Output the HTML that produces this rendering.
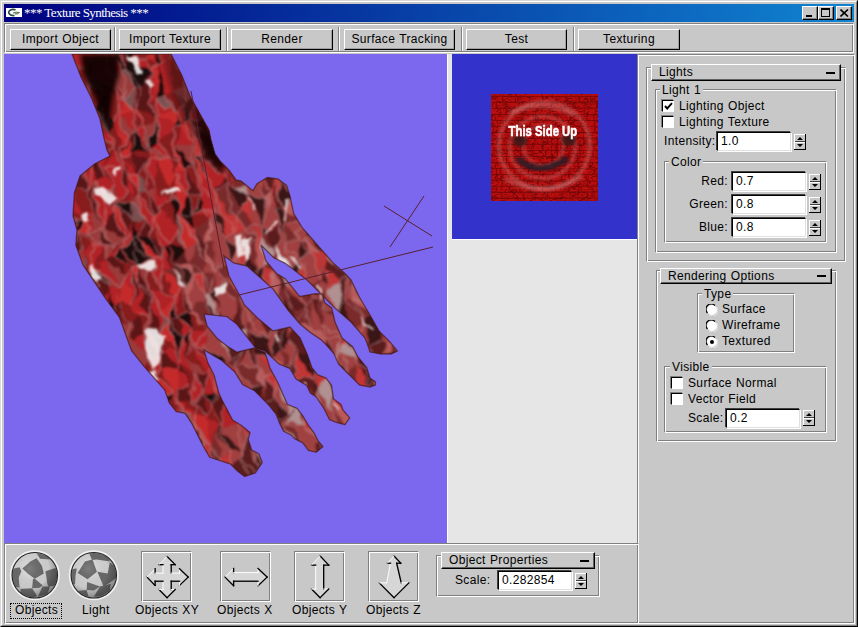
<!DOCTYPE html>
<html><head><meta charset="utf-8">
<style>
*{margin:0;padding:0;box-sizing:border-box}
html,body{width:858px;height:627px;overflow:hidden;background:#c8c8c8}
body{position:relative;font-family:"Liberation Sans",sans-serif;font-size:12px;color:#000}
.a{position:absolute}
.win{left:0;top:0;width:858px;height:627px;background:#c8c8c8;border-top:1px solid #d8d8d8;border-left:1px solid #d8d8d8;border-right:1px solid #000;border-bottom:1px solid #000}
.win2{left:1px;top:1px;width:856px;height:625px;border-top:1px solid #fff;border-left:1px solid #fff;border-right:1px solid #808080;border-bottom:1px solid #808080}
.title{left:4px;top:4px;width:850px;height:18px;background:linear-gradient(to right,#000080,#1084d0)}
.ttext{left:20px;top:2px;color:#fff;font-family:"Liberation Serif",serif;font-size:13px;line-height:13px;letter-spacing:-0.55px;white-space:nowrap}
.tb{width:16px;height:14px;top:6px;background:#c8c8c8;border-top:1px solid #fff;border-left:1px solid #fff;border-right:1px solid #000;border-bottom:1px solid #000;box-shadow:inset -1px -1px 0 #808080}
.groove{border-top:1px solid #808080;border-left:1px solid #808080;border-right:1px solid #fff;border-bottom:1px solid #fff;box-shadow:inset 1px 1px 0 #fff,inset -1px -1px 0 #808080}
.btn{top:29px;height:21px;background:#c8c8c8;border-top:1px solid #fff;border-left:1px solid #fff;border-right:1px solid #000;border-bottom:1px solid #000;box-shadow:inset -1px -1px 0 #a0a0a0;text-align:center;line-height:18px;font-size:12px;letter-spacing:0.35px;word-spacing:0.5px;white-space:nowrap}
.sep{top:27px;width:2px;height:24px;border-left:1px solid #808080;border-right:1px solid #fff}
.lbl{white-space:nowrap;font-size:12px;line-height:13px;letter-spacing:0.35px;word-spacing:0.5px}
.hdr{background:#c8c8c8;border-top:1px solid #fff;border-left:1px solid #fff;border-right:1px solid #000;border-bottom:1px solid #000;box-shadow:inset -1px -1px 0 #606060}
.inp{background:#fff;border-top:1px solid #000;border-left:1px solid #000;border-right:1px solid #e0e0e0;border-bottom:1px solid #e0e0e0;box-shadow:-1px -1px 0 #404040, 1px 1px 0 #fff}
.spin{background:#c8c8c8;border-top:1px solid #fff;border-left:1px solid #fff;border-right:1px solid #000;border-bottom:1px solid #000}
.cb{width:12px;height:12px;background:#fff;border-top:1px solid #000;border-left:1px solid #000;border-right:1px solid #fff;border-bottom:1px solid #fff;box-shadow:-1px -1px 0 #808080}
</style></head><body>
<div class="a win"></div>
<div class="a win2"></div>
<div class="a title">
  <div class="a" style="left:2px;top:4px;width:16px;height:9px;background:#fff"></div>
  <svg class="a" style="left:2px;top:4px" width="16" height="9" viewBox="0 0 16 9"><path d="M9.5 2 Q7 0.8 4.5 2 Q2 3.5 3 5.5 Q4.5 8 8.5 7.5" fill="none" stroke="#2a4a40" stroke-width="1.6"/><path d="M7 5 Q10 3.5 13.5 4.5 Q12 6.5 9 6" fill="#b8c090" stroke="#506a50" stroke-width="0.9"/></svg>
  <div class="a ttext">*** Texture Synthesis ***</div>
</div>
<div class="a tb" style="left:802px"><div class="a" style="left:3px;top:8px;width:6px;height:2px;background:#000"></div></div>
<div class="a tb" style="left:818px"><div class="a" style="left:2px;top:1px;width:9px;height:9px;border:1px solid #000;border-top-width:2px"></div></div>
<div class="a tb" style="left:836px"><svg class="a" style="left:3px;top:2px" width="9" height="8"><path d="M0.5 0.5 L8 7.5 M8 0.5 L0.5 7.5" stroke="#000" stroke-width="1.6"/></svg></div>

<!-- toolbar -->
<div class="a groove" style="left:4px;top:23px;width:850px;height:30px"></div>
<div class="a btn" style="left:10px;width:101px">Import Object</div>
<div class="a sep" style="left:114px"></div>
<div class="a btn" style="left:119px;width:102px">Import Texture</div>
<div class="a sep" style="left:226px"></div>
<div class="a btn" style="left:231px;width:102px">Render</div>
<div class="a sep" style="left:338px"></div>
<div class="a btn" style="left:344px;width:111px">Surface Tracking</div>
<div class="a sep" style="left:461px"></div>
<div class="a btn" style="left:466px;width:101px">Test</div>
<div class="a sep" style="left:573px"></div>
<div class="a btn" style="left:578px;width:102px">Texturing</div>

<!-- viewport -->
<div class="a" style="left:4px;top:54px;width:443px;height:489px;background:#7b68ee;overflow:hidden">
<svg class="a" style="left:-4px;top:-54px" width="858" height="627" viewBox="0 0 858 627">
<defs><clipPath id="hc"><polygon points="72.0,54.0 171.0,54.0 181.7,75.0 190.0,96.0 199.5,113.0 209.0,130.0 211.0,140.0 215.0,154.0 220.0,161.0 229.0,170.0 236.0,180.0 241.0,181.0 253.0,190.7 257.0,183.7 267.4,177.6 278.0,179.0 286.6,185.5 290.0,196.0 293.6,213.4 302.0,227.4 313.0,240.0 333.7,263.6 345.6,274.0 351.0,280.0 354.4,287.0 359.6,297.5 370.0,315.0 379.0,331.0 384.0,336.0 389.5,341.4 397.4,351.0 391.0,354.0 381.0,354.0 370.0,352.0 367.0,343.0 365.0,338.0 351.0,322.0 335.0,308.0 321.0,294.0 307.0,280.0 285.0,263.0 274.0,258.0 261.0,245.0 266.0,261.0 276.5,273.5 285.0,278.6 299.7,296.4 315.4,293.8 322.8,294.0 324.6,302.8 331.6,308.0 335.0,322.0 342.0,338.0 352.6,346.7 358.0,357.0 366.7,367.7 370.0,378.0 375.4,381.8 375.4,385.0 370.0,387.0 359.6,385.0 352.6,378.0 347.4,373.0 338.6,364.0 334.0,353.7 328.0,346.7 321.0,339.6 310.5,332.6 300.0,323.9 288.0,310.0 273.0,289.0 264.0,281.0 247.0,266.0 234.0,263.0 224.0,256.0 229.0,276.0 239.4,295.0 244.5,305.0 257.0,317.5 273.0,331.0 290.0,327.0 300.0,338.0 307.0,353.7 312.0,367.7 317.5,374.7 326.0,378.0 331.5,385.3 333.4,398.7 341.0,404.5 343.0,410.0 349.7,417.9 344.9,424.6 337.2,422.7 329.6,419.8 323.8,408.3 316.2,396.8 310.4,393.0 306.6,385.3 296.0,379.0 290.0,368.6 279.0,364.0 265.0,351.0 256.0,348.5 251.0,342.0 243.0,332.0 237.0,324.2 227.0,316.6 204.0,314.0 207.0,326.0 217.0,338.3 227.0,346.0 237.0,352.3 254.0,348.0 265.0,352.6 270.0,368.0 278.0,383.0 287.4,404.5 297.0,408.3 302.8,416.0 308.5,425.5 314.2,433.2 318.0,440.8 322.9,446.6 316.2,452.3 308.5,450.4 302.8,442.8 295.0,438.9 291.3,435.0 283.6,431.3 279.8,423.6 276.0,414.0 268.3,404.5 254.9,391.0 242.6,384.5 234.7,371.8 222.0,360.6 204.0,350.0 207.5,362.0 214.0,375.0 218.7,392.5 222.0,400.0 232.6,420.0 241.5,425.5 250.0,432.6 248.2,439.6 251.8,450.2 258.8,453.7 262.3,462.5 255.3,473.0 244.7,476.5 237.7,471.2 230.7,464.2 220.2,460.7 209.6,457.2 202.6,444.9 199.1,437.9 192.1,423.9 185.1,413.3 176.3,411.6 169.3,402.8 164.8,390.0 143.6,365.8 131.5,350.6 119.4,317.3 106.0,299.0 94.5,282.0 83.0,265.0 75.8,245.0 77.0,230.0 73.0,216.0 74.4,193.0 80.0,176.0 94.5,164.0 110.0,156.0 107.0,150.0 105.0,142.0 104.0,138.0 100.0,119.0 91.5,98.0 81.0,77.0"/></clipPath>
<filter id="hb" x="40" y="40" width="400" height="460" filterUnits="userSpaceOnUse"><feGaussianBlur stdDeviation="1.1"/></filter>
<filter id="hd" x="40" y="40" width="400" height="460" filterUnits="userSpaceOnUse"><feTurbulence type="fractalNoise" baseFrequency="0.06" numOctaves="2" seed="4" result="t"/><feDisplacementMap in="SourceGraphic" in2="t" scale="14" xChannelSelector="R" yChannelSelector="G" result="d"/><feGaussianBlur in="d" stdDeviation="0.9"/></filter>
<filter id="hb2" x="40" y="40" width="400" height="460" filterUnits="userSpaceOnUse"><feGaussianBlur stdDeviation="2"/></filter></defs>
<g clip-path="url(#hc)"><rect x="40" y="40" width="400" height="460" fill="#8a1e22"/><g filter="url(#hd)"><path fill="#b02426" d="M88 43L103 52L95 55ZM82 44L86 70L69 50ZM69 63L69 76L54 71ZM141 24L153 56L148 58ZM122 38L126 68L117 42ZM117 42L120 70L113 49ZM113 49L120 70L110 71ZM103 52L110 71L96 76ZM103 52L96 76L95 55ZM86 70L86 83L90 97ZM171 39L174 54L155 39ZM155 39L174 54L161 61ZM148 58L149 70L132 58ZM110 71L119 96L96 76ZM189 41L194 63L191 81ZM189 41L191 81L178 50ZM178 50L191 81L185 82ZM174 54L172 89L161 61ZM161 61L172 89L164 96ZM161 61L164 96L155 64ZM149 70L156 99L150 102ZM125 99L119 116L119 96ZM119 96L119 116L115 123ZM92 120L93 128L94 139ZM92 120L94 139L76 115ZM156 99L176 113L158 109ZM134 109L137 130L119 116ZM119 116L127 138L115 123ZM107 133L114 150L93 128ZM62 149L83 172L69 172ZM199 93L206 119L192 119ZM185 106L180 129L176 113ZM158 109L171 130L160 143ZM146 126L148 151L137 130ZM114 150L123 168L105 167ZM107 151L105 176L91 150ZM89 163L95 180L87 191ZM89 163L87 191L83 172ZM83 172L72 185L69 172ZM69 172L72 185L60 192ZM211 105L224 119L217 127ZM192 119L196 134L186 124ZM180 129L193 142L177 144ZM171 130L177 144L178 161ZM160 143L170 157L150 149ZM148 151L158 160L147 163ZM120 156L140 172L131 172ZM123 168L127 191L105 167ZM105 167L127 191L114 186ZM105 176L114 186L106 193ZM105 176L106 193L95 180ZM72 185L83 219L60 192ZM217 127L214 145L209 138ZM196 134L196 157L193 142ZM177 144L185 172L178 161ZM158 160L155 185L147 163ZM131 172L131 201L127 191ZM127 191L116 205L114 186ZM106 193L113 211L105 227ZM106 193L105 227L94 197ZM94 197L105 227L100 224ZM93 212L89 237L83 219ZM73 217L77 229L74 246ZM214 145L225 163L223 174ZM202 156L223 174L210 177ZM193 166L201 183L201 192ZM185 172L188 192L172 175ZM155 185L171 201L160 206ZM136 197L154 216L144 220ZM113 211L128 233L124 238ZM89 237L102 248L94 245ZM74 246L83 252L82 266ZM223 174L215 193L210 177ZM210 177L215 193L214 208ZM210 177L214 208L201 183ZM201 183L214 208L201 211ZM201 183L201 211L201 192ZM180 204L180 216L176 216ZM160 206L175 230L157 229ZM154 216L157 229L150 234ZM154 216L150 234L144 220ZM133 217L132 242L128 233ZM128 233L132 242L121 250ZM124 238L121 250L115 256ZM112 248L115 256L105 259ZM102 248L97 270L94 245ZM94 245L97 270L91 270ZM94 245L91 270L83 252ZM201 211L214 214L211 222ZM201 211L211 222L195 212ZM180 216L197 242L176 216ZM175 230L170 241L157 229ZM157 229L170 241L165 248ZM105 259L121 289L97 270ZM165 248L173 270L162 269ZM165 248L162 269L162 260ZM162 260L162 269L160 289ZM162 260L160 289L152 259ZM132 267L133 304L126 276ZM121 289L112 306L109 286ZM109 286L105 320L103 298ZM103 298L91 319L87 294ZM160 289L175 302L162 307ZM160 289L162 307L146 288ZM146 288L162 307L154 303ZM138 286L149 316L133 304ZM179 284L177 319L175 302ZM162 307L162 334L154 303ZM177 319L192 330L184 340ZM149 336L161 352L143 339ZM143 339L151 357L133 338ZM127 346L128 363L118 349ZM207 330L205 348L193 349ZM207 330L193 349L192 330ZM184 340L186 355L177 361ZM176 350L177 371L164 350ZM161 352L159 366L158 377ZM161 352L158 377L151 357ZM193 349L213 361L209 374ZM186 355L197 373L177 361ZM177 371L192 382L177 387ZM213 361L216 392L209 374ZM209 374L216 392L203 395ZM197 373L203 395L193 405ZM177 387L179 401L179 407ZM177 387L179 407L171 388ZM233 368L247 400L226 376ZM226 376L247 400L236 397ZM226 376L236 397L221 391ZM221 391L236 397L226 402ZM179 401L193 416L198 428ZM179 407L181 431L169 418ZM247 400L248 414L236 416ZM226 402L235 422L219 429ZM207 413L216 430L211 446ZM193 416L200 445L198 428ZM259 415L261 423L248 414ZM248 414L257 432L236 416ZM236 416L257 432L246 433Z"/><path fill="#861a1e" d="M100 41L113 49L103 52ZM69 50L72 71L69 63ZM139 40L148 58L132 58ZM86 70L90 97L72 71ZM72 71L78 104L69 76ZM171 39L178 50L174 54ZM148 58L155 64L149 70ZM110 71L125 99L119 96ZM86 83L103 95L96 108ZM86 83L96 108L90 97ZM78 104L92 120L76 115ZM174 54L185 82L172 89ZM135 88L137 108L134 109ZM119 96L115 123L103 95ZM96 108L107 133L93 128ZM96 108L93 128L92 120ZM194 63L204 85L191 81ZM191 81L204 85L199 93ZM172 89L185 106L164 96ZM164 96L185 106L176 113ZM156 99L158 109L150 102ZM137 108L155 116L146 126ZM134 109L146 126L137 130ZM115 123L120 144L107 133ZM107 133L120 144L114 150ZM93 128L114 150L107 151ZM93 128L107 151L94 139ZM94 139L107 151L91 150ZM84 147L89 163L77 150ZM204 85L206 119L199 93ZM187 103L186 124L185 106ZM185 106L186 124L180 129ZM120 144L123 168L114 150ZM114 150L105 167L107 151ZM206 119L217 127L209 138ZM186 124L196 134L193 142ZM180 129L177 144L171 130ZM171 130L178 161L160 143ZM160 143L178 161L170 157ZM150 149L158 160L148 151ZM148 151L147 163L130 154ZM130 154L140 172L120 156ZM120 156L131 172L123 168ZM105 167L114 186L105 176ZM87 191L93 212L72 185ZM72 185L93 212L83 219ZM60 192L83 219L73 217ZM60 192L73 217L60 208ZM224 119L219 143L217 127ZM209 138L214 145L202 156ZM209 138L202 156L196 134ZM193 142L196 157L193 166ZM178 161L172 175L170 157ZM158 160L169 190L155 185ZM147 163L155 185L148 190ZM147 163L148 190L140 172ZM131 172L136 197L131 201ZM127 191L131 201L116 205ZM114 186L116 205L113 211ZM196 157L201 183L193 166ZM193 166L201 192L185 172ZM172 175L180 204L169 190ZM169 190L171 201L155 185ZM148 190L154 216L136 197ZM77 229L94 245L83 252ZM238 165L237 191L225 163ZM225 163L237 191L226 185ZM201 192L195 212L188 192ZM171 201L175 230L160 206ZM144 220L138 238L133 217ZM124 238L115 256L112 248ZM102 248L105 259L97 270ZM83 252L91 270L90 284ZM82 266L75 286L70 274ZM195 212L211 222L194 229ZM175 230L186 250L170 241ZM157 229L165 248L150 234ZM121 250L141 265L132 267ZM115 256L132 267L126 276ZM91 270L103 298L90 284ZM152 259L160 289L146 288ZM126 276L118 303L121 289ZM103 298L105 320L91 319ZM162 269L175 302L160 289ZM133 304L140 316L118 303ZM118 303L140 316L129 324ZM112 306L129 324L119 324ZM179 284L187 308L177 319ZM149 316L143 339L140 316ZM119 324L127 346L118 349ZM119 324L118 349L112 342ZM187 308L207 330L192 330ZM162 334L176 350L164 350ZM127 346L142 370L128 363ZM164 350L159 366L161 352ZM151 357L151 388L142 370ZM205 348L213 361L193 349ZM193 349L209 374L186 355ZM177 361L197 373L192 382ZM159 366L171 388L158 377ZM227 361L221 391L213 361ZM197 373L193 405L192 382ZM171 388L179 407L169 418ZM221 391L226 402L216 392ZM203 395L216 405L207 413ZM193 405L207 413L193 416ZM193 405L193 416L179 401ZM236 397L236 416L235 422ZM216 405L216 430L207 413ZM248 414L261 423L257 432Z"/><path fill="#5a1216" d="M122 38L132 58L126 68ZM95 55L86 83L86 70ZM72 71L90 97L78 104ZM155 39L161 61L153 56ZM96 76L119 96L103 95ZM149 70L150 102L144 87ZM144 87L150 102L137 108ZM144 87L137 108L135 88ZM191 81L199 93L185 82ZM150 102L155 116L137 108ZM199 93L192 119L187 103ZM146 126L150 149L148 151ZM137 130L130 154L127 138ZM127 138L120 156L120 144ZM91 150L105 176L95 180ZM83 172L87 191L72 185ZM69 172L60 192L67 182ZM211 105L217 127L206 119ZM206 119L209 138L192 119ZM130 154L147 163L140 172ZM123 168L131 172L127 191ZM95 180L94 197L87 191ZM87 191L94 197L93 212ZM94 197L100 224L93 212ZM235 138L238 165L219 143ZM214 145L223 174L202 156ZM185 172L201 192L188 192ZM148 190L160 206L154 216ZM116 205L133 217L128 233ZM113 211L124 238L105 227ZM100 224L112 248L102 248ZM89 237L94 245L77 229ZM77 229L83 252L74 246ZM223 174L226 185L215 193ZM144 220L150 234L138 238ZM150 234L165 248L162 260ZM115 256L126 276L105 259ZM91 270L109 286L103 298ZM90 284L103 298L87 294ZM141 265L146 288L138 286ZM132 267L138 286L133 304ZM146 288L154 303L138 286ZM138 286L154 303L149 316ZM118 303L129 324L112 306ZM112 306L119 324L105 320ZM105 320L119 324L112 342ZM154 303L162 334L149 336ZM140 316L143 339L133 338ZM140 316L133 338L129 324ZM177 319L184 340L167 324ZM162 334L164 350L149 336ZM143 339L161 352L151 357ZM184 340L177 361L176 350ZM176 350L177 361L177 371ZM164 350L177 371L159 366ZM177 361L192 382L177 371ZM151 388L153 406L141 387ZM209 374L203 395L197 373ZM192 382L193 405L179 401ZM192 382L179 401L177 387ZM164 396L162 429L153 406ZM216 392L226 402L216 405ZM203 395L207 413L193 405ZM247 400L236 416L236 397ZM236 397L235 422L226 402ZM226 402L219 429L216 405Z"/><path fill="#9a3a3a" d="M69 50L86 70L72 71ZM113 49L110 71L103 52ZM95 55L96 76L86 83ZM120 70L135 88L125 99ZM120 70L125 99L110 71ZM90 97L96 108L92 120ZM178 50L185 82L174 54ZM185 82L199 93L187 103ZM185 82L187 103L172 89ZM150 102L158 109L155 116ZM119 116L137 130L127 138ZM84 147L91 150L89 163ZM158 109L160 143L155 116ZM155 116L150 149L146 126ZM192 119L209 138L196 134ZM150 149L170 157L158 160ZM95 180L106 193L94 197ZM60 208L73 217L67 224ZM217 127L219 143L214 145ZM193 142L193 166L177 144ZM114 186L113 211L106 193ZM93 212L100 224L89 237ZM67 224L74 246L56 244ZM169 190L180 204L171 201ZM155 185L160 206L148 190ZM136 197L144 220L131 201ZM105 227L124 238L112 248ZM105 227L112 248L100 224ZM100 224L102 248L89 237ZM128 233L121 250L124 238ZM112 248L105 259L102 248ZM215 193L220 213L214 208ZM105 259L126 276L121 289ZM97 270L121 289L109 286ZM152 259L146 288L141 265ZM154 303L149 336L149 316ZM149 316L149 336L143 339ZM129 324L133 338L127 346ZM129 324L127 346L119 324ZM149 336L164 350L161 352ZM133 338L151 357L142 370ZM133 338L142 370L127 346ZM118 349L128 363L123 377ZM192 330L193 349L186 355ZM151 357L158 377L151 388ZM186 355L209 374L197 373ZM216 405L219 429L216 430Z"/><path fill="#1c0a0a" d="M88 43L95 55L82 44ZM139 40L132 58L122 38ZM117 42L126 68L120 70ZM153 56L161 61L155 64ZM132 58L149 70L144 87ZM132 58L144 87L126 68ZM126 68L144 87L135 88ZM155 64L164 96L156 99ZM103 95L115 123L107 133ZM103 95L107 133L96 108ZM172 89L187 103L185 106ZM77 150L89 163L83 172ZM204 85L211 105L206 119ZM187 103L192 119L186 124ZM176 113L180 129L171 130ZM155 116L160 143L150 149ZM137 130L148 151L130 154ZM107 151L105 167L105 176ZM91 150L95 180L89 163ZM67 182L60 192L60 208ZM177 144L193 166L185 172ZM83 219L77 229L73 217ZM73 217L74 246L67 224ZM202 156L210 177L196 157ZM131 201L133 217L116 205ZM201 192L201 211L195 212ZM188 192L195 212L180 216ZM180 204L176 216L171 201ZM171 201L176 216L175 230ZM133 217L138 238L132 242ZM195 212L194 229L180 216ZM150 234L162 260L138 238ZM138 238L152 259L132 242ZM132 242L152 259L141 265ZM132 242L141 265L121 250ZM121 250L132 267L115 256ZM97 270L109 286L91 270ZM186 250L177 264L170 241ZM170 241L173 270L165 248ZM109 286L112 306L105 320ZM175 302L177 319L167 324ZM187 308L192 330L177 319ZM167 324L184 340L176 350ZM192 330L186 355L184 340ZM142 370L151 388L141 387ZM142 370L141 387L128 363ZM205 348L227 361L213 361ZM171 388L169 418L164 396ZM164 396L169 418L162 429ZM216 392L216 405L203 395Z"/><path fill="#c42c2c" d="M57 28L69 50L69 63ZM57 28L69 63L60 44ZM100 41L103 52L88 43ZM82 44L95 55L86 70ZM69 63L72 71L69 76ZM153 56L155 64L148 58ZM90 97L92 120L78 104ZM155 64L156 99L149 70ZM125 99L134 109L119 116ZM137 108L146 126L134 109ZM115 123L127 138L120 144ZM176 113L171 130L158 109ZM127 138L130 154L120 156ZM120 144L120 156L123 168ZM186 124L193 142L180 129ZM196 134L202 156L196 157ZM178 161L185 172L172 175ZM170 157L172 175L169 190ZM170 157L169 190L158 160ZM140 172L136 197L131 172ZM83 219L89 237L77 229ZM219 143L225 163L214 145ZM196 157L210 177L201 183ZM172 175L188 192L180 204ZM116 205L128 233L113 211ZM74 246L82 266L56 244ZM225 163L226 185L223 174ZM188 192L180 216L180 204ZM160 206L157 229L154 216ZM82 266L90 284L75 286ZM214 208L214 214L201 211ZM180 216L194 229L197 242ZM176 216L197 242L186 250ZM138 238L162 260L152 259ZM90 284L87 294L75 286ZM141 265L138 286L132 267ZM126 276L133 304L118 303ZM121 289L118 303L112 306ZM162 269L179 284L175 302ZM133 304L149 316L140 316ZM175 302L167 324L162 307ZM167 324L176 350L162 334ZM177 371L177 387L159 366ZM159 366L177 387L171 388ZM158 377L171 388L164 396ZM158 377L164 396L151 388ZM227 361L226 376L221 391ZM213 361L221 391L216 392ZM179 401L198 428L179 407ZM207 413L211 446L193 416ZM236 416L246 433L235 422Z"/><path fill="#7a5050" d="M126 68L135 88L120 70ZM96 76L103 95L86 83ZM135 88L134 109L125 99ZM164 96L176 113L156 99ZM140 172L148 190L136 197ZM219 143L238 165L225 163ZM131 201L144 220L133 217ZM56 244L82 266L70 274ZM241 150L258 175L247 186ZM241 150L247 186L238 165ZM83 252L90 284L82 266ZM176 216L186 250L175 230ZM162 307L167 324L162 334ZM151 388L164 396L153 406ZM179 407L198 428L181 431Z"/><path fill="#a04040" d="M258 175L266 198L247 186ZM247 186L266 198L249 195ZM295 173L291 199L279 174ZM272 193L274 209L267 212ZM266 198L267 212L261 226ZM249 195L261 226L252 223ZM214 214L225 238L213 242ZM194 229L203 258L197 242ZM197 242L193 266L186 250ZM274 209L282 223L267 212ZM267 212L282 223L269 231ZM267 212L269 231L261 226ZM261 226L260 239L252 223ZM252 223L254 239L245 230ZM245 230L248 249L234 233ZM234 233L248 249L239 250ZM234 233L239 250L225 238ZM225 238L228 261L213 242ZM213 242L228 261L217 266ZM205 245L217 266L215 272ZM203 258L215 272L205 273ZM308 211L304 237L303 222ZM303 222L304 237L296 237ZM303 222L296 237L287 223ZM282 223L284 243L273 250ZM239 250L247 281L238 287ZM228 261L238 287L226 282ZM217 266L226 282L216 287ZM193 276L204 298L193 308ZM186 288L187 308L179 284ZM313 235L320 254L304 237ZM296 237L300 262L284 243ZM284 243L300 262L293 267ZM284 243L293 267L273 250ZM273 250L279 269L272 254ZM272 254L279 269L275 274ZM247 281L259 287L254 298ZM216 287L236 300L219 306ZM210 294L219 306L218 321ZM336 234L335 256L333 264ZM320 254L327 270L320 282ZM310 251L320 282L306 284ZM310 251L306 284L300 262ZM279 269L280 294L275 274ZM259 287L264 304L258 311ZM259 287L258 311L254 298ZM254 298L251 322L241 293ZM241 293L251 322L244 328ZM236 300L233 335L219 306ZM218 321L221 345L208 317ZM208 317L221 345L205 348ZM320 282L327 287L319 296ZM306 284L319 296L312 300ZM299 291L303 306L290 286ZM280 294L286 315L270 301ZM270 301L286 315L283 318ZM258 311L268 336L251 322ZM251 322L268 336L251 332ZM221 345L231 361L227 361ZM221 345L227 361L205 348ZM369 270L375 291L363 300ZM346 274L353 300L342 299ZM327 287L337 314L328 309ZM312 300L323 325L309 328ZM286 315L294 331L292 342ZM275 327L272 357L268 336ZM247 346L255 370L242 363ZM231 361L233 368L226 376ZM337 314L352 328L348 333ZM328 309L348 333L343 339ZM328 309L343 339L323 325ZM323 325L343 339L328 336ZM323 325L328 336L309 328ZM292 342L292 366L282 350ZM282 350L284 367L272 357ZM258 356L273 373L266 375ZM258 356L266 375L255 370ZM233 368L253 386L247 400ZM385 299L379 323L376 305ZM364 318L369 347L358 342ZM364 318L358 342L352 328ZM343 339L335 355L328 336ZM321 348L324 358L316 363ZM321 348L316 363L314 351ZM284 367L277 387L273 373ZM266 375L264 404L263 386ZM379 323L392 344L383 338ZM349 342L365 369L356 361ZM340 348L356 361L348 375ZM340 348L348 375L335 355ZM324 358L345 386L330 379ZM324 358L330 379L316 363ZM316 363L318 386L312 380ZM294 377L309 404L291 381ZM277 387L289 417L274 397ZM235 422L246 433L243 450ZM235 422L243 450L219 429ZM216 430L228 449L221 458ZM189 446L202 461L200 472ZM402 341L400 373L392 344ZM386 358L392 377L374 374ZM348 375L356 394L343 393ZM348 375L343 393L345 386ZM318 386L333 414L322 416ZM289 417L289 426L284 430ZM257 432L258 464L246 433ZM243 450L244 459L231 465ZM243 450L231 465L228 449ZM217 462L211 486L202 461ZM368 390L377 400L367 405ZM368 390L367 405L356 394ZM333 400L346 429L333 414ZM333 414L339 435L322 416ZM322 416L339 435L327 432ZM322 416L327 432L310 424ZM301 423L322 442L313 453ZM301 423L313 453L289 426ZM258 464L268 470L255 473ZM233 476L227 489L223 484Z"/><path fill="#7a2a2c" d="M238 165L247 186L237 191ZM272 165L279 174L274 177ZM258 175L272 193L266 198ZM226 185L242 208L235 217ZM226 185L235 217L215 193ZM214 208L220 213L214 214ZM242 208L252 223L245 230ZM242 208L245 230L235 217ZM211 222L205 245L194 229ZM197 242L203 258L193 266ZM170 241L177 264L173 270ZM291 199L308 211L303 222ZM281 206L303 222L287 223ZM245 230L254 239L248 249ZM213 242L217 266L205 245ZM203 258L205 273L193 266ZM193 266L205 273L193 276ZM173 270L179 284L162 269ZM287 223L296 237L284 243ZM269 231L272 254L260 239ZM254 239L256 272L248 249ZM228 261L226 282L217 266ZM215 272L216 287L210 294ZM215 272L210 294L205 273ZM205 273L210 294L204 298ZM304 237L310 251L296 237ZM272 254L275 274L262 266ZM226 282L241 293L236 300ZM226 282L236 300L216 287ZM204 298L208 317L193 308ZM193 308L208 317L207 330ZM342 235L345 253L335 256ZM268 289L270 301L264 304ZM254 298L258 311L251 322ZM241 293L244 328L236 300ZM218 321L220 335L221 345ZM208 317L205 348L207 330ZM345 253L369 270L354 275ZM345 253L354 275L335 256ZM335 256L346 274L333 264ZM320 282L319 296L306 284ZM299 291L312 300L303 306ZM290 286L291 308L280 294ZM251 322L251 332L244 328ZM244 328L251 332L247 346ZM233 335L243 350L220 335ZM354 275L353 300L346 274ZM327 287L328 309L319 296ZM319 296L328 309L323 325ZM312 300L309 328L303 306ZM303 306L309 328L298 327ZM303 306L298 327L291 308ZM286 315L292 342L283 318ZM251 332L258 356L255 370ZM243 350L242 363L233 368ZM231 361L226 376L227 361ZM353 300L375 316L364 318ZM353 300L364 318L342 299ZM342 299L364 318L352 328ZM292 342L297 352L292 366ZM282 350L292 366L284 367ZM255 370L263 386L242 363ZM242 363L263 386L253 386ZM242 363L253 386L233 368ZM314 351L316 363L312 380ZM284 367L291 381L277 387ZM390 320L414 341L402 341ZM369 347L386 358L372 361ZM294 377L317 395L309 404ZM264 404L280 426L259 415ZM216 430L221 458L211 446ZM200 445L217 462L202 461ZM414 341L403 361L402 341ZM392 344L400 373L392 377ZM386 358L374 374L372 361ZM372 361L372 378L365 369ZM356 361L356 394L348 375ZM330 379L333 400L333 414ZM317 395L322 416L310 424ZM309 404L301 423L298 400ZM280 422L284 430L277 440ZM280 426L277 440L270 442ZM280 426L270 442L261 423ZM257 432L260 454L258 464ZM333 414L346 429L339 435ZM289 426L307 457L284 430ZM284 430L292 457L277 440ZM260 454L277 474L268 470ZM231 465L251 481L238 485ZM327 432L334 460L326 465ZM327 432L326 465L322 442Z"/><path fill="#5a1c1e" d="M256 166L274 177L272 193ZM274 177L281 206L274 209ZM194 229L205 245L203 258ZM186 250L193 266L177 264ZM294 190L308 211L291 199ZM177 264L186 288L173 270ZM287 223L284 243L282 223ZM282 223L273 250L269 231ZM186 288L193 308L187 308ZM313 235L329 253L320 254ZM256 272L268 289L259 287ZM329 253L333 264L327 270ZM279 269L290 286L280 294ZM236 300L244 328L233 335ZM219 306L233 335L220 335ZM333 264L346 274L340 281ZM333 264L340 281L327 270ZM327 270L327 287L320 282ZM306 284L312 300L299 291ZM290 286L303 306L291 308ZM270 301L283 318L264 304ZM264 304L283 318L275 327ZM258 311L275 327L268 336ZM233 335L247 346L243 350ZM220 335L243 350L231 361ZM369 270L363 300L354 275ZM346 274L342 299L340 281ZM319 296L323 325L312 300ZM291 308L294 331L286 315ZM283 318L282 350L275 327ZM243 350L233 368L231 361ZM375 291L385 299L376 305ZM375 291L376 305L363 300ZM337 314L348 333L328 309ZM298 327L314 351L294 331ZM294 331L314 351L297 352ZM294 331L297 352L292 342ZM376 305L383 338L375 316ZM352 328L358 342L349 342ZM348 333L340 348L343 339ZM328 336L335 355L324 358ZM297 352L294 377L292 366ZM292 366L294 377L291 381ZM266 375L274 397L264 404ZM263 386L264 404L259 415ZM253 386L248 414L247 400ZM383 338L386 358L369 347ZM358 342L372 361L365 369ZM335 355L348 375L345 386ZM312 380L317 395L294 377ZM274 397L280 422L264 404ZM264 404L280 422L280 426ZM219 429L228 449L216 430ZM211 446L221 458L217 462ZM402 341L403 361L400 373ZM392 344L392 377L386 358ZM365 369L368 390L356 361ZM345 386L333 400L330 379ZM289 417L284 430L280 422ZM246 433L258 464L244 459ZM372 378L377 400L368 390ZM343 393L363 418L358 423ZM310 424L327 432L322 442ZM289 426L313 453L307 457ZM258 464L255 473L244 459ZM244 459L255 473L251 481ZM244 459L251 481L231 465ZM231 465L238 485L233 476ZM358 423L358 448L346 429ZM322 442L326 465L311 459ZM322 442L311 459L313 453ZM307 457L294 471L292 457Z"/><path fill="#b85a5a" d="M305 171L294 190L295 173ZM272 193L267 212L266 198ZM214 214L213 242L211 222ZM211 222L213 242L205 245ZM291 199L303 222L281 206ZM205 245L215 272L203 258ZM193 266L193 276L177 264ZM254 239L262 266L256 272ZM239 250L238 287L228 261ZM193 276L193 308L186 288ZM304 237L320 254L310 251ZM238 287L241 293L226 282ZM193 308L207 330L187 308ZM336 234L333 264L329 253ZM293 267L299 291L290 286ZM275 274L280 294L270 301ZM275 274L270 301L268 289ZM354 275L363 300L353 300ZM363 300L376 305L375 316ZM363 300L375 316L353 300ZM309 328L328 336L321 348ZM309 328L321 348L298 327ZM272 357L284 367L273 373ZM255 370L266 375L263 386ZM385 299L390 320L379 323ZM328 336L324 358L321 348ZM193 416L211 446L200 445ZM390 320L402 341L379 323ZM383 338L392 344L386 358ZM280 422L277 440L280 426ZM246 433L244 459L243 450ZM221 458L223 484L217 462ZM374 374L386 400L372 378ZM333 400L358 423L346 429ZM310 424L322 442L301 423ZM255 473L254 499L251 481Z"/><path fill="#3a1414" d="M237 191L249 195L242 208ZM237 191L242 208L226 185ZM279 174L291 199L281 206ZM266 198L261 226L249 195ZM220 213L225 238L214 214ZM281 206L287 223L274 209ZM274 209L287 223L282 223ZM261 226L269 231L260 239ZM225 238L239 250L228 261ZM177 264L193 276L186 288ZM308 211L313 235L304 237ZM269 231L273 250L272 254ZM248 249L256 272L247 281ZM318 222L336 234L329 253ZM296 237L310 251L300 262ZM262 266L268 289L256 272ZM256 272L259 287L247 281ZM247 281L254 298L238 287ZM216 287L219 306L210 294ZM204 298L218 321L208 317ZM300 262L299 291L293 267ZM268 289L264 304L259 287ZM335 256L354 275L346 274ZM280 294L291 308L286 315ZM264 304L275 327L258 311ZM340 281L342 299L337 314ZM291 308L298 327L294 331ZM283 318L292 342L282 350ZM275 327L282 350L272 357ZM268 336L272 357L258 356ZM268 336L258 356L251 332ZM251 332L255 370L247 346ZM247 346L242 363L243 350ZM342 299L352 328L337 314ZM376 305L379 323L383 338ZM375 316L383 338L369 347ZM375 316L369 347L364 318ZM314 351L312 380L297 352ZM292 366L291 381L284 367ZM263 386L259 415L253 386ZM198 428L200 445L189 446ZM358 342L365 369L349 342ZM312 380L318 386L317 395ZM274 397L289 417L280 422ZM219 429L243 450L228 449ZM372 361L374 374L372 378ZM365 369L372 378L368 390ZM298 400L289 426L289 417ZM261 423L260 454L257 432ZM221 458L233 476L223 484ZM372 378L386 400L377 400ZM260 454L268 470L258 464ZM233 476L238 485L227 489ZM268 470L267 503L255 473Z"/><path fill="#c03434" d="M256 166L272 193L258 175ZM215 193L235 217L220 213ZM295 173L294 190L291 199ZM279 174L281 206L274 177ZM274 177L274 209L272 193ZM249 195L252 223L242 208ZM235 217L245 230L234 233ZM235 217L234 233L220 213ZM220 213L234 233L225 238ZM252 223L260 239L254 239ZM315 202L313 235L308 211ZM260 239L262 266L254 239ZM248 249L247 281L239 250ZM217 266L216 287L215 272ZM205 273L204 298L193 276ZM262 266L275 274L268 289ZM238 287L254 298L241 293ZM329 253L327 270L320 254ZM320 254L320 282L310 251ZM300 262L306 284L299 291ZM327 270L340 281L327 287ZM272 357L273 373L258 356ZM352 328L349 342L348 333ZM348 333L349 342L340 348ZM297 352L312 380L294 377ZM273 373L277 387L274 397ZM273 373L274 397L266 375ZM253 386L259 415L248 414ZM198 428L189 446L181 431ZM379 323L402 341L392 344ZM369 347L372 361L358 342ZM316 363L330 379L318 386ZM291 381L309 404L298 400ZM291 381L298 400L277 387ZM211 446L217 462L200 445ZM356 361L368 390L356 394ZM345 386L343 393L333 400ZM309 404L310 424L301 423ZM261 423L270 442L260 454ZM228 449L233 476L221 458ZM356 394L363 418L343 393ZM343 393L358 423L333 400ZM358 423L355 433L358 448ZM313 453L313 474L307 457Z"/><path fill="#b09090" d="M283 160L295 173L279 174ZM247 186L249 195L237 191ZM260 239L272 254L262 266ZM318 222L329 253L313 235ZM210 294L218 321L204 298ZM293 267L290 286L279 269ZM219 306L220 335L218 321ZM244 328L247 346L233 335ZM220 335L231 361L221 345ZM340 281L337 314L327 287ZM298 327L321 348L314 351ZM343 339L340 348L335 355ZM349 342L356 361L340 348ZM277 387L298 400L289 417ZM259 415L280 426L261 423ZM200 445L202 461L189 446ZM330 379L333 414L318 386ZM318 386L322 416L317 395ZM317 395L310 424L309 404ZM298 400L301 423L289 426ZM228 449L231 465L233 476ZM284 430L307 457L292 457ZM270 442L277 474L260 454ZM313 453L311 459L313 474Z"/><path fill="#e8e0e0" d="M272 165L274 177L256 166ZM173 270L186 288L179 284ZM315 202L318 222L313 235ZM273 250L293 267L279 269ZM335 355L345 386L324 358Z"/><path fill="none" stroke="#c89494" stroke-opacity="0.45" stroke-width="1.3" d="M57 28L69 50M57 28L69 63M100 41L88 43M88 43L82 44M82 44L69 50M69 63L54 71M69 63L69 76M156 29L141 24M156 29L153 56M122 38L132 58M122 38L126 68M117 42L126 68M117 42L120 70M113 49L120 70M103 52L110 71M103 52L95 55M86 70L86 83M155 39L174 54M155 39L153 56M155 39L161 61M148 58L132 58M148 58L149 70M126 68L144 87M126 68L120 70M126 68L135 88M120 70L125 99M110 71L125 99M110 71L119 96M96 76L119 96M86 83L103 95M86 83L90 97M86 83L96 108M178 50L174 54M178 50L185 82M174 54L161 61M161 61L155 64M155 64L149 70M149 70L150 102M144 87L135 88M144 87L137 108M135 88L137 108M135 88L125 99M125 99L134 109M125 99L119 96M119 96L119 116M119 96L115 123M103 95L107 133M96 108L107 133M96 108L92 120M191 81L204 85M191 81L199 93M185 82L199 93M185 82L187 103M172 89L185 106M164 96L156 99M164 96L176 113M156 99L176 113M156 99L158 109M150 102L155 116M137 108L146 126M134 109L137 130M119 116L127 138M107 133L114 150M93 128L114 150M94 139L84 147M84 147L91 150M77 150L83 172M204 85L199 93M199 93L192 119M187 103L186 124M185 106L176 113M176 113L180 129M158 109L160 143M155 116L160 143M155 116L150 149M146 126L150 149M146 126L137 130M137 130L148 151M137 130L127 138M137 130L130 154M127 138L120 144M120 144L120 156M120 144L123 168M114 150L123 168M114 150L107 151M91 150L105 176M91 150L89 163M89 163L87 191M83 172L87 191M69 172L72 185M69 172L67 182M67 182L60 192M211 105L224 119M211 105L206 119M211 105L217 127M206 119L192 119M192 119L209 138M192 119L186 124M186 124L196 134M186 124L193 142M180 129L171 130M171 130L178 161M160 143L170 157M150 149L170 157M150 149L148 151M148 151L158 160M148 151L147 163M130 154L120 156M123 168L131 172M123 168L105 167M123 168L127 191M105 167L114 186M95 180L106 193M95 180L87 191M95 180L94 197M87 191L72 185M87 191L93 212M60 208L73 217M60 208L43 203M224 119L217 127M217 127L219 143M209 138L196 134M209 138L202 156M196 134L202 156M196 134L193 142M196 134L196 157M193 142L193 166M177 144L178 161M178 161L185 172M178 161L170 157M170 157L158 160M158 160L147 163M147 163L155 185M147 163L140 172M147 163L148 190M140 172L131 172M140 172L136 197M131 172L136 197M127 191L116 205M114 186L106 193M106 193L94 197M106 193L105 227M94 197L105 227M94 197L100 224M83 219L89 237M83 219L73 217M83 219L77 229M73 217L67 224M73 217L74 246M219 143L225 163M214 145L225 163M214 145L202 156M202 156L223 174M202 156L196 157M202 156L210 177M196 157L210 177M196 157L193 166M196 157L201 183M193 166L201 183M193 166L185 172M193 166L201 192M185 172L188 192M172 175L188 192M169 190L180 204M169 190L171 201M148 190L154 216M136 197L154 216M136 197L144 220M131 201L144 220M131 201L116 205M116 205L133 217M116 205L113 211M116 205L128 233M113 211L124 238M105 227L100 224M105 227L112 248M100 224L112 248M100 224L89 237M100 224L102 248M89 237L102 248M77 229L94 245M77 229L74 246M77 229L83 252M74 246L83 252M74 246L82 266M241 150L238 165M241 150L247 186M225 163L237 191M225 163L223 174M223 174L226 185M210 177L215 193M201 183L214 208M201 192L188 192M201 192L195 212M188 192L195 212M180 204L180 216M180 204L171 201M171 201L160 206M160 206L154 216M154 216L157 229M154 216L150 234M144 220L150 234M144 220L138 238M128 233L132 242M128 233L121 250M124 238L112 248M124 238L115 256M112 248L102 248M102 248L105 259M102 248L94 245M94 245L91 270M82 266L75 286M272 165L279 174M272 165L274 177M256 166L272 193M258 175L266 198M247 186L237 191M237 191L226 185M226 185L215 193M226 185L235 217M215 193L214 208M215 193L220 213M214 208L220 213M214 208L201 211M201 211L214 214M201 211L195 212M201 211L211 222M195 212L180 216M180 216L197 242M176 216L197 242M176 216L186 250M175 230L186 250M175 230L170 241M157 229L170 241M157 229L165 248M150 234L162 260M138 238L132 242M138 238L152 259M132 242L152 259M132 242L121 250M132 242L141 265M121 250L141 265M115 256L132 267M97 270L121 289M97 270L91 270M97 270L109 286M91 270L109 286M90 284L103 298M90 284L75 286M305 171L295 173M295 173L294 190M295 173L279 174M279 174L291 199M279 174L274 177M279 174L281 206M274 177L281 206M272 193L266 198M266 198L267 212M266 198L249 195M266 198L261 226M249 195L242 208M242 208L235 217M235 217L245 230M235 217L234 233M220 213L234 233M214 214L225 238M211 222L213 242M194 229L203 258M197 242L203 258M165 248L162 260M162 260L152 259M162 260L160 289M152 259L160 289M152 259L141 265M152 259L146 288M141 265L132 267M141 265L138 286M132 267L138 286M132 267L126 276M132 267L133 304M126 276L121 289M103 298L91 319M294 190L308 211M291 199L308 211M291 199L281 206M291 199L303 222M281 206L274 209M281 206L287 223M274 209L282 223M267 212L261 226M261 226L269 231M261 226L252 223M261 226L260 239M252 223L245 230M245 230L254 239M234 233L225 238M225 238L239 250M225 238L228 261M205 245L215 272M203 258L215 272M193 266L205 273M193 266L193 276M177 264L193 276M177 264L186 288M173 270L186 288M173 270L179 284M162 269L160 289M160 289L175 302M146 288L162 307M146 288L138 286M146 288L154 303M138 286L154 303M118 303L129 324M112 306L105 320M105 320L119 324M105 320L91 319M315 202L318 222M315 202L313 235M308 211L313 235M303 222L287 223M303 222L296 237M287 223L284 243M282 223L284 243M282 223L273 250M269 231L260 239M260 239L262 266M254 239L262 266M254 239L248 249M248 249L247 281M239 250L247 281M239 250L238 287M228 261L217 266M217 266L226 282M217 266L215 272M215 272L210 294M205 273L210 294M205 273L193 276M205 273L204 298M193 276L204 298M193 276L186 288M186 288L193 308M179 284L175 302M175 302L177 319M175 302L167 324M162 307L167 324M154 303L149 316M149 316L140 316M149 316L143 339M129 324L127 346M119 324L112 342M119 324L118 349M318 222L329 253M304 237L320 254M304 237L296 237M296 237L310 251M296 237L284 243M284 243L300 262M284 243L293 267M273 250L293 267M262 266L256 272M262 266L268 289M256 272L268 289M256 272L247 281M247 281L259 287M247 281L238 287M247 281L254 298M238 287L226 282M238 287L241 293M226 282L216 287M216 287L236 300M216 287L210 294M204 298L218 321M204 298L208 317M187 308L177 319M177 319L192 330M177 319L167 324M167 324L184 340M167 324L162 334M167 324L176 350M162 334L149 336M149 336L164 350M149 336L161 352M143 339L161 352M143 339L151 357M118 349L105 354M342 235L335 256M336 234L335 256M336 234L333 264M329 253L333 264M310 251L320 282M310 251L300 262M300 262L306 284M300 262L293 267M300 262L299 291M293 267L279 269M279 269L290 286M275 274L280 294M275 274L268 289M275 274L270 301M268 289L259 287M268 289L264 304M259 287L254 298M259 287L258 311M254 298L251 322M241 293L251 322M241 293L244 328M219 306L218 321M219 306L220 335M218 321L221 345M207 330L193 349M192 330L193 349M192 330L184 340M184 340L177 361M176 350L177 361M176 350L177 371M164 350L159 366M161 352L159 366M161 352L158 377M151 357L158 377M142 370L128 363M345 253L369 270M345 253L354 275M335 256L354 275M335 256L333 264M333 264L346 274M327 270L327 287M306 284L299 291M306 284L312 300M299 291L303 306M290 286L291 308M280 294L270 301M280 294L286 315M270 301L264 304M251 322L268 336M244 328L251 332M233 335L220 335M233 335L243 350M220 335L221 345M205 348L227 361M205 348L193 349M205 348L213 361M193 349L213 361M158 377L171 388M158 377L151 388M151 388L164 396M151 388L153 406M369 270L354 275M369 270L363 300M354 275L363 300M354 275L346 274M354 275L353 300M346 274L353 300M346 274L340 281M346 274L342 299M327 287L337 314M327 287L328 309M319 296L312 300M312 300L303 306M303 306L309 328M303 306L298 327M286 315L294 331M286 315L283 318M283 318L282 350M275 327L268 336M275 327L272 357M268 336L251 332M247 346L255 370M243 350L231 361M243 350L233 368M227 361L226 376M227 361L221 391M213 361L221 391M213 361L209 374M213 361L216 392M209 374L216 392M209 374L203 395M197 373L203 395M197 373L193 405M192 382L177 387M177 387L179 401M177 387L179 407M171 388L179 407M171 388L164 396M164 396L169 418M375 291L376 305M363 300L353 300M363 300L375 316M353 300L364 318M342 299L364 318M342 299L337 314M337 314L328 309M323 325L343 339M323 325L328 336M309 328L328 336M298 327L321 348M298 327L294 331M298 327L314 351M292 342L297 352M292 342L292 366M272 357L258 356M272 357L273 373M258 356L255 370M255 370L242 363M255 370L263 386M242 363L233 368M233 368L253 386M233 368L247 400M226 376L221 391M221 391L226 402M216 392L226 402M216 392L216 405M203 395L216 405M203 395L193 405M193 405L207 413M193 405L193 416M179 401L179 407M179 407L198 428M385 299L390 320M385 299L376 305M385 299L379 323M364 318L358 342M352 328L349 342M348 333L349 342M343 339L340 348M343 339L328 336M343 339L335 355M328 336L335 355M321 348L324 358M321 348L316 363M297 352L292 366M297 352L294 377M292 366L294 377M292 366L284 367M284 367L277 387M273 373L277 387M273 373L266 375M273 373L274 397M266 375L274 397M266 375L263 386M263 386L253 386M253 386L259 415M247 400L236 397M236 397L226 402M236 397L235 422M226 402L219 429M216 405L207 413M193 416L198 428M198 428L189 446M390 320L414 341M390 320L379 323M383 338L369 347M369 347L386 358M358 342L349 342M349 342L340 348M340 348L335 355M340 348L348 375M335 355L348 375M335 355L345 386M324 358L345 386M324 358L316 363M324 358L330 379M316 363L330 379M316 363L312 380M312 380L294 377M291 381L309 404M291 381L277 387M277 387L274 397M274 397L289 417M274 397L264 404M264 404L280 422M264 404L259 415M264 404L280 426M259 415L280 426M248 414L261 423M248 414L257 432M236 416L257 432M236 416L246 433M235 422L243 450M219 429L228 449M211 446L221 458M211 446L217 462M200 445L217 462M200 445L189 446M200 445L202 461M414 341L403 361M402 341L403 361M402 341L400 373M386 358L392 377M386 358L372 361M372 361L365 369M372 361L372 378M365 369L356 361M365 369L368 390M348 375L345 386M345 386L330 379M330 379L318 386M318 386L322 416M317 395L322 416M309 404L310 424M309 404L301 423M298 400L301 423M298 400L289 417M298 400L289 426M289 417L280 422M289 417L284 430M280 422L284 430M280 426L277 440M280 426L261 423M280 426L270 442M257 432L258 464M246 433L258 464M246 433L244 459M228 449L231 465M221 458L233 476M221 458L217 462M372 378L368 390M368 390L356 394M368 390L367 405M356 394L343 393M343 393L333 400M333 400L358 423M333 400L333 414M333 400L346 429M333 414L339 435M322 416L339 435M301 423L322 442M289 426L313 453M284 430L307 457M260 454L258 464M260 454L268 470M258 464L255 473M244 459L255 473M244 459L251 481M233 476L238 485M233 476L223 484M233 476L227 489M322 442L326 465M255 473L254 499"/></g>
<polygon points="80,54 119,54 119,75 113,96 110,119 104,117 94,96 84,75" fill="#0e0606" opacity="0.92" filter="url(#hb2)"/>
<polygon points="162,54 175,54 185.9,81.3 198.5,108.5 211,133.7 219.4,152.6 222,162 206.8,154.7 194.3,133.7 177.5,108.5 168,81.3" fill="#2a0a0a" opacity="0.4" filter="url(#hb2)"/><polygon points="192,104 200,110 211,133.7 219.4,152.6 210,154 200,135" fill="#0a0404" opacity="0.6" filter="url(#hb2)"/>
<polygon points="196,128 212,134 222,160 230,172 214,166 202,150" fill="#0c0606" opacity="0.7" filter="url(#hb2)"/>
<g stroke="#eee8e8" stroke-width="2" fill="none" filter="url(#hd)" opacity="0.85" stroke-linecap="round">
<path d="M250 198 L254 212 M265 233 L272 226 L279 222 M284 200 L287 219 M292 258 L300 268 M318 286 L323 298 M360 318 L372 332 M302 385 L305 392 M274 335 L280 341 M336 404 L340 410"/>
</g>
<g fill="#f4f0f0" filter="url(#hd)" opacity="0.9">
<polygon points="129,55 136,55 142,69 138,72"/>
<polygon points="146,79 150,80 153,88 149,88"/>
<polygon points="112,174 118,167 121,170 115,176"/>
<polygon points="96,188 104,186 117,198 112,203 100,196"/>
<polygon points="163,191 180,188 182,192 165,194"/>
<polygon points="81,214 87,212 89,221 83,222"/>
<polygon points="90,264 95,262 101,280 97,284"/>
<polygon points="140,264 153,262 154,269 142,270"/>
<polygon points="236,236 242,234 246,252 240,258"/>
<polygon points="244,240 249,238 251,255 247,260"/>
<polygon points="214,286 226,284 228,296 216,298"/>
<polygon points="144,334 156,326 166,336 162,356 152,368 146,356"/><polygon points="150,372 156,368 160,380 154,384"/>
</g>
</g>
<polygon points="72.0,54.0 171.0,54.0 181.7,75.0 190.0,96.0 199.5,113.0 209.0,130.0 211.0,140.0 215.0,154.0 220.0,161.0 229.0,170.0 236.0,180.0 241.0,181.0 253.0,190.7 257.0,183.7 267.4,177.6 278.0,179.0 286.6,185.5 290.0,196.0 293.6,213.4 302.0,227.4 313.0,240.0 333.7,263.6 345.6,274.0 351.0,280.0 354.4,287.0 359.6,297.5 370.0,315.0 379.0,331.0 384.0,336.0 389.5,341.4 397.4,351.0 391.0,354.0 381.0,354.0 370.0,352.0 367.0,343.0 365.0,338.0 351.0,322.0 335.0,308.0 321.0,294.0 307.0,280.0 285.0,263.0 274.0,258.0 261.0,245.0 266.0,261.0 276.5,273.5 285.0,278.6 299.7,296.4 315.4,293.8 322.8,294.0 324.6,302.8 331.6,308.0 335.0,322.0 342.0,338.0 352.6,346.7 358.0,357.0 366.7,367.7 370.0,378.0 375.4,381.8 375.4,385.0 370.0,387.0 359.6,385.0 352.6,378.0 347.4,373.0 338.6,364.0 334.0,353.7 328.0,346.7 321.0,339.6 310.5,332.6 300.0,323.9 288.0,310.0 273.0,289.0 264.0,281.0 247.0,266.0 234.0,263.0 224.0,256.0 229.0,276.0 239.4,295.0 244.5,305.0 257.0,317.5 273.0,331.0 290.0,327.0 300.0,338.0 307.0,353.7 312.0,367.7 317.5,374.7 326.0,378.0 331.5,385.3 333.4,398.7 341.0,404.5 343.0,410.0 349.7,417.9 344.9,424.6 337.2,422.7 329.6,419.8 323.8,408.3 316.2,396.8 310.4,393.0 306.6,385.3 296.0,379.0 290.0,368.6 279.0,364.0 265.0,351.0 256.0,348.5 251.0,342.0 243.0,332.0 237.0,324.2 227.0,316.6 204.0,314.0 207.0,326.0 217.0,338.3 227.0,346.0 237.0,352.3 254.0,348.0 265.0,352.6 270.0,368.0 278.0,383.0 287.4,404.5 297.0,408.3 302.8,416.0 308.5,425.5 314.2,433.2 318.0,440.8 322.9,446.6 316.2,452.3 308.5,450.4 302.8,442.8 295.0,438.9 291.3,435.0 283.6,431.3 279.8,423.6 276.0,414.0 268.3,404.5 254.9,391.0 242.6,384.5 234.7,371.8 222.0,360.6 204.0,350.0 207.5,362.0 214.0,375.0 218.7,392.5 222.0,400.0 232.6,420.0 241.5,425.5 250.0,432.6 248.2,439.6 251.8,450.2 258.8,453.7 262.3,462.5 255.3,473.0 244.7,476.5 237.7,471.2 230.7,464.2 220.2,460.7 209.6,457.2 202.6,444.9 199.1,437.9 192.1,423.9 185.1,413.3 176.3,411.6 169.3,402.8 164.8,390.0 143.6,365.8 131.5,350.6 119.4,317.3 106.0,299.0 94.5,282.0 83.0,265.0 75.8,245.0 77.0,230.0 73.0,216.0 74.4,193.0 80.0,176.0 94.5,164.0 110.0,156.0 107.0,150.0 105.0,142.0 104.0,138.0 100.0,119.0 91.5,98.0 81.0,77.0" fill="none" stroke="#3c1414" stroke-width="1.4" stroke-opacity="0.55"/>
<g stroke="#5a2030" stroke-width="1" fill="none">
<path d="M384 206 L432 236 M424 196 L390 247 M433 247 L239 295 M191 91 L224 268"/>
</g>
</svg>
</div>
<div class="a" style="left:447px;top:54px;width:190px;height:489px;background:#e6e6e6;border-left:1px solid #fff"></div>
<div class="a" style="left:452px;top:54px;width:185px;height:186px;background:#3333cc;border-bottom:1px solid #fff"></div>

<div class="a groove" style="left:637px;top:54px;width:218px;height:570px"></div>
<div class="a groove" style="left:646px;top:67px;width:200px;height:195px"></div>
<div class="a hdr" style="left:651px;top:64px;width:190px;height:17px"></div>
<div class="a lbl" style="left:659px;top:66px;">Lights</div>
<div class="a" style="left:826px;top:72px;width:9px;height:2px;background:#000"></div>
<div class="a groove" style="left:655px;top:89px;width:182px;height:164px"></div>
<div class="a lbl" style="left:660px;top:84px;padding:0 2px;background:#c8c8c8">Light 1</div>
<div class="a cb" style="left:662px;top:100px"><svg class="a" style="left:1px;top:1px" width="9" height="9" viewBox="0 0 9 9"><path d="M1 4 L3.2 6.5 L8 1.2" fill="none" stroke="#000" stroke-width="1.9"/></svg></div>
<div class="a lbl" style="left:679px;top:100px;">Lighting Object</div>
<div class="a cb" style="left:662px;top:116px"></div>
<div class="a lbl" style="left:679px;top:116px;">Lighting Texture</div>
<div class="a lbl" style="left:664px;top:135px;">Intensity:</div>
<div class="a inp" style="left:717px;top:132px;width:74px;height:19px"><div class="a lbl" style="left:3px;top:2px">1.0</div></div>
<svg class="a" style="left:794px;top:134px" width="12" height="16" viewBox="0 0 12 16"><rect x="0" y="0" width="12" height="16" fill="#c8c8c8"/><rect x="0" y="0" width="11" height="1" fill="#fff"/><rect x="0" y="0" width="1" height="15" fill="#fff"/><rect x="11" y="0" width="1" height="16" fill="#000"/><rect x="0" y="15" width="12" height="1" fill="#000"/><rect x="1" y="7" width="10" height="1" fill="#404040"/><rect x="1" y="8" width="10" height="1" fill="#fff"/><path d="M3 6 L9 6 L6 3 Z M3 10 L9 10 L6 13 Z" fill="#000"/></svg>
<div class="a groove" style="left:664px;top:161px;width:163px;height:82px"></div>
<div class="a lbl" style="left:669px;top:156px;padding:0 2px;background:#c8c8c8">Color</div>
<div class="a lbl" style="right:130px;top:175px;text-align:right">Red:</div>
<div class="a inp" style="left:732px;top:172px;width:74px;height:19px"><div class="a lbl" style="left:3px;top:2px">0.7</div></div>
<svg class="a" style="left:809px;top:174px" width="12" height="16" viewBox="0 0 12 16"><rect x="0" y="0" width="12" height="16" fill="#c8c8c8"/><rect x="0" y="0" width="11" height="1" fill="#fff"/><rect x="0" y="0" width="1" height="15" fill="#fff"/><rect x="11" y="0" width="1" height="16" fill="#000"/><rect x="0" y="15" width="12" height="1" fill="#000"/><rect x="1" y="7" width="10" height="1" fill="#404040"/><rect x="1" y="8" width="10" height="1" fill="#fff"/><path d="M3 6 L9 6 L6 3 Z M3 10 L9 10 L6 13 Z" fill="#000"/></svg>
<div class="a lbl" style="right:130px;top:198px;text-align:right">Green:</div>
<div class="a inp" style="left:732px;top:195px;width:74px;height:19px"><div class="a lbl" style="left:3px;top:2px">0.8</div></div>
<svg class="a" style="left:809px;top:197px" width="12" height="16" viewBox="0 0 12 16"><rect x="0" y="0" width="12" height="16" fill="#c8c8c8"/><rect x="0" y="0" width="11" height="1" fill="#fff"/><rect x="0" y="0" width="1" height="15" fill="#fff"/><rect x="11" y="0" width="1" height="16" fill="#000"/><rect x="0" y="15" width="12" height="1" fill="#000"/><rect x="1" y="7" width="10" height="1" fill="#404040"/><rect x="1" y="8" width="10" height="1" fill="#fff"/><path d="M3 6 L9 6 L6 3 Z M3 10 L9 10 L6 13 Z" fill="#000"/></svg>
<div class="a lbl" style="right:130px;top:221px;text-align:right">Blue:</div>
<div class="a inp" style="left:732px;top:218px;width:74px;height:19px"><div class="a lbl" style="left:3px;top:2px">0.8</div></div>
<svg class="a" style="left:809px;top:220px" width="12" height="16" viewBox="0 0 12 16"><rect x="0" y="0" width="12" height="16" fill="#c8c8c8"/><rect x="0" y="0" width="11" height="1" fill="#fff"/><rect x="0" y="0" width="1" height="15" fill="#fff"/><rect x="11" y="0" width="1" height="16" fill="#000"/><rect x="0" y="15" width="12" height="1" fill="#000"/><rect x="1" y="7" width="10" height="1" fill="#404040"/><rect x="1" y="8" width="10" height="1" fill="#fff"/><path d="M3 6 L9 6 L6 3 Z M3 10 L9 10 L6 13 Z" fill="#000"/></svg>
<div class="a groove" style="left:656px;top:270px;width:181px;height:172px"></div>
<div class="a hdr" style="left:660px;top:268px;width:172px;height:16px"></div>
<div class="a lbl" style="left:668px;top:270px;">Rendering Options</div>
<div class="a" style="left:817px;top:275px;width:9px;height:2px;background:#000"></div>
<div class="a groove" style="left:697px;top:293px;width:98px;height:60px"></div>
<div class="a lbl" style="left:702px;top:288px;padding:0 2px;background:#c8c8c8">Type</div>
<svg class="a" style="left:706px;top:304px" width="12" height="12" viewBox="0 0 12 12"><circle cx="6" cy="6" r="5" fill="#fff"/><path d="M1.5 9 A5 5 0 0 1 9 1.5" fill="none" stroke="#000" stroke-width="1.2"/><path d="M10.5 3 A5 5 0 0 1 3 10.5" fill="none" stroke="#e8e8e8" stroke-width="1"/></svg>
<div class="a lbl" style="left:722px;top:303px;">Surface</div>
<svg class="a" style="left:706px;top:320px" width="12" height="12" viewBox="0 0 12 12"><circle cx="6" cy="6" r="5" fill="#fff"/><path d="M1.5 9 A5 5 0 0 1 9 1.5" fill="none" stroke="#000" stroke-width="1.2"/><path d="M10.5 3 A5 5 0 0 1 3 10.5" fill="none" stroke="#e8e8e8" stroke-width="1"/></svg>
<div class="a lbl" style="left:722px;top:319px;">Wireframe</div>
<svg class="a" style="left:706px;top:336px" width="12" height="12" viewBox="0 0 12 12"><circle cx="6" cy="6" r="5" fill="#fff"/><path d="M1.5 9 A5 5 0 0 1 9 1.5" fill="none" stroke="#000" stroke-width="1.2"/><path d="M10.5 3 A5 5 0 0 1 3 10.5" fill="none" stroke="#e8e8e8" stroke-width="1"/><circle cx="6" cy="6" r="2" fill="#000"/></svg>
<div class="a lbl" style="left:722px;top:335px;">Textured</div>
<div class="a groove" style="left:664px;top:366px;width:163px;height:67px"></div>
<div class="a lbl" style="left:670px;top:361px;padding:0 2px;background:#c8c8c8">Visible</div>
<div class="a cb" style="left:671px;top:377px"></div>
<div class="a lbl" style="left:688px;top:377px;">Surface Normal</div>
<div class="a cb" style="left:671px;top:393px"></div>
<div class="a lbl" style="left:688px;top:393px;">Vector Field</div>
<div class="a lbl" style="left:688px;top:412px;">Scale:</div>
<div class="a inp" style="left:726px;top:409px;width:74px;height:19px"><div class="a lbl" style="left:3px;top:2px">0.2</div></div>
<svg class="a" style="left:803px;top:410px" width="12" height="16" viewBox="0 0 12 16"><rect x="0" y="0" width="12" height="16" fill="#c8c8c8"/><rect x="0" y="0" width="11" height="1" fill="#fff"/><rect x="0" y="0" width="1" height="15" fill="#fff"/><rect x="11" y="0" width="1" height="16" fill="#000"/><rect x="0" y="15" width="12" height="1" fill="#000"/><rect x="1" y="7" width="10" height="1" fill="#404040"/><rect x="1" y="8" width="10" height="1" fill="#fff"/><path d="M3 6 L9 6 L6 3 Z M3 10 L9 10 L6 13 Z" fill="#000"/></svg>
<div class="a groove" style="left:4px;top:543px;width:635px;height:81px"></div>
<div class="a groove" style="left:141px;top:551px;width:51px;height:51px"></div>
<div class="a lbl" style="left:135px;top:604px;">Objects XY</div>
<div class="a groove" style="left:220px;top:551px;width:51px;height:51px"></div>
<div class="a lbl" style="left:217px;top:604px;">Objects X</div>
<div class="a groove" style="left:294px;top:551px;width:51px;height:51px"></div>
<div class="a lbl" style="left:292px;top:604px;">Objects Y</div>
<div class="a groove" style="left:368px;top:551px;width:51px;height:51px"></div>
<div class="a lbl" style="left:366px;top:604px;">Objects Z</div>
<div class="a" style="left:10px;top:603px;width:52px;height:16px;border:1px dotted #000"></div>
<div class="a lbl" style="left:15px;top:604px;">Objects</div>
<div class="a lbl" style="left:82px;top:604px;">Light</div>
<div class="a groove" style="left:436px;top:555px;width:164px;height:42px"></div>
<div class="a hdr" style="left:441px;top:552px;width:154px;height:17px"></div>
<div class="a lbl" style="left:449px;top:554px;">Object Properties</div>
<div class="a" style="left:580px;top:560px;width:9px;height:2px;background:#000"></div>
<div class="a lbl" style="left:455px;top:574px;">Scale:</div>
<div class="a inp" style="left:498px;top:571px;width:74px;height:19px"><div class="a lbl" style="left:3px;top:2px">0.282854</div></div>
<svg class="a" style="left:575px;top:573px" width="12" height="16" viewBox="0 0 12 16"><rect x="0" y="0" width="12" height="16" fill="#c8c8c8"/><rect x="0" y="0" width="11" height="1" fill="#fff"/><rect x="0" y="0" width="1" height="15" fill="#fff"/><rect x="11" y="0" width="1" height="16" fill="#000"/><rect x="0" y="15" width="12" height="1" fill="#000"/><rect x="1" y="7" width="10" height="1" fill="#404040"/><rect x="1" y="8" width="10" height="1" fill="#fff"/><path d="M3 6 L9 6 L6 3 Z M3 10 L9 10 L6 13 Z" fill="#000"/></svg>
<svg class="a" style="left:8px;top:548px" width="56" height="56" viewBox="0 0 627 627"><defs><clipPath id="bc8"><circle cx="300" cy="305" r="250"/></clipPath><radialGradient id="bg8" cx="0.4" cy="0.35" r="0.7"><stop offset="0" stop-color="#e4e4e4"/><stop offset="1" stop-color="#b8b8b8"/></radialGradient><radialGradient id="bs8" cx="0.38" cy="0.35" r="0.72"><stop offset="0" stop-color="#fff" stop-opacity="0.15"/><stop offset="0.6" stop-color="#000" stop-opacity="0"/><stop offset="1" stop-color="#000" stop-opacity="0.35"/></radialGradient></defs><circle cx="300" cy="305" r="272" fill="none" stroke="#f2f2f2" stroke-width="16"/><circle cx="300" cy="305" r="250" fill="url(#bg8)"/><g clip-path="url(#bc8)" fill="#686868"><polygon points="160,230 250,150 320,115 380,200 400,285 300,345 220,285"/><polygon points="30,240 130,215 150,260 120,330 130,445 40,420"/><polygon points="420,260 530,225 580,300 520,420 455,435 440,400"/><polygon points="280,345 300,345 390,420 350,445 270,450"/><polygon points="140,460 270,450 325,535 250,590 140,560"/><polygon points="385,430 470,430 440,520 335,545"/><polygon points="320,60 440,80 470,130 360,120"/></g><circle cx="300" cy="305" r="250" fill="url(#bs8)"/><circle cx="300" cy="305" r="254" fill="none" stroke="#222" stroke-width="12"/></svg>
<svg class="a" style="left:67px;top:548px" width="56" height="56" viewBox="0 0 627 627"><defs><clipPath id="bc67"><circle cx="300" cy="305" r="250"/></clipPath><radialGradient id="bg67" cx="0.4" cy="0.35" r="0.7"><stop offset="0" stop-color="#e4e4e4"/><stop offset="1" stop-color="#b8b8b8"/></radialGradient><radialGradient id="bs67" cx="0.38" cy="0.35" r="0.72"><stop offset="0" stop-color="#fff" stop-opacity="0.15"/><stop offset="0.6" stop-color="#000" stop-opacity="0"/><stop offset="1" stop-color="#000" stop-opacity="0.35"/></radialGradient></defs><circle cx="300" cy="305" r="272" fill="none" stroke="#f2f2f2" stroke-width="16"/><circle cx="300" cy="305" r="250" fill="url(#bg67)"/><g clip-path="url(#bc67)" fill="#686868"><polygon points="240,40 360,40 460,90 480,150 330,130 280,135"/><polygon points="120,280 200,150 285,130 335,265 230,350"/><polygon points="340,265 455,285 480,160 560,220 560,330 470,395 410,430"/><polygon points="30,240 110,230 95,310 90,410 40,400"/><polygon points="225,380 370,430 300,475 220,470"/><polygon points="130,480 220,470 245,560 140,560"/><polygon points="370,430 490,400 480,480 385,540 300,545"/></g><circle cx="300" cy="305" r="250" fill="url(#bs67)"/><circle cx="300" cy="305" r="254" fill="none" stroke="#222" stroke-width="12"/></svg>
<svg class="a" style="left:136px;top:546px" width="60" height="60" viewBox="0 0 627 627"><polygon points="325,110 410,195 368,195 368,283 455,283 455,238 545,325 455,412 455,368 368,368 368,455 410,455 325,540 240,455 282,455 282,368 200,368 200,412 115,325 200,238 200,283 282,283 282,195 240,195" fill="#d6d6d6"/><line x1="325" y1="110" x2="410" y2="195" stroke="#000" stroke-width="14" stroke-linecap="square"/><line x1="410" y1="195" x2="368" y2="195" stroke="#000" stroke-width="14" stroke-linecap="square"/><line x1="368" y1="195" x2="368" y2="283" stroke="#000" stroke-width="14" stroke-linecap="square"/><line x1="368" y1="283" x2="455" y2="283" stroke="#fff" stroke-width="10" stroke-linecap="square"/><line x1="455" y1="283" x2="455" y2="238" stroke="#fff" stroke-width="10" stroke-linecap="square"/><line x1="455" y1="238" x2="545" y2="325" stroke="#000" stroke-width="14" stroke-linecap="square"/><line x1="545" y1="325" x2="455" y2="412" stroke="#000" stroke-width="14" stroke-linecap="square"/><line x1="455" y1="412" x2="455" y2="368" stroke="#fff" stroke-width="10" stroke-linecap="square"/><line x1="455" y1="368" x2="368" y2="368" stroke="#000" stroke-width="14" stroke-linecap="square"/><line x1="368" y1="368" x2="368" y2="455" stroke="#000" stroke-width="14" stroke-linecap="square"/><line x1="368" y1="455" x2="410" y2="455" stroke="#fff" stroke-width="10" stroke-linecap="square"/><line x1="410" y1="455" x2="325" y2="540" stroke="#000" stroke-width="14" stroke-linecap="square"/><line x1="325" y1="540" x2="240" y2="455" stroke="#000" stroke-width="14" stroke-linecap="square"/><line x1="240" y1="455" x2="282" y2="455" stroke="#fff" stroke-width="10" stroke-linecap="square"/><line x1="282" y1="455" x2="282" y2="368" stroke="#fff" stroke-width="10" stroke-linecap="square"/><line x1="282" y1="368" x2="200" y2="368" stroke="#000" stroke-width="14" stroke-linecap="square"/><line x1="200" y1="368" x2="200" y2="412" stroke="#000" stroke-width="14" stroke-linecap="square"/><line x1="200" y1="412" x2="115" y2="325" stroke="#000" stroke-width="14" stroke-linecap="square"/><line x1="115" y1="325" x2="200" y2="238" stroke="#fff" stroke-width="10" stroke-linecap="square"/><line x1="200" y1="238" x2="200" y2="283" stroke="#000" stroke-width="14" stroke-linecap="square"/><line x1="200" y1="283" x2="282" y2="283" stroke="#fff" stroke-width="10" stroke-linecap="square"/><line x1="282" y1="283" x2="282" y2="195" stroke="#fff" stroke-width="10" stroke-linecap="square"/><line x1="282" y1="195" x2="240" y2="195" stroke="#000" stroke-width="14" stroke-linecap="square"/><line x1="240" y1="195" x2="325" y2="110" stroke="#fff" stroke-width="10" stroke-linecap="square"/></svg>
<svg class="a" style="left:214px;top:546px" width="60" height="60" viewBox="0 0 627 627"><polygon points="115,325 205,235 205,278 460,278 460,235 555,325 460,415 460,368 205,368 205,415" fill="#d6d6d6"/><line x1="115" y1="325" x2="205" y2="235" stroke="#fff" stroke-width="10" stroke-linecap="square"/><line x1="205" y1="235" x2="205" y2="278" stroke="#000" stroke-width="14" stroke-linecap="square"/><line x1="205" y1="278" x2="460" y2="278" stroke="#fff" stroke-width="10" stroke-linecap="square"/><line x1="460" y1="278" x2="460" y2="235" stroke="#fff" stroke-width="10" stroke-linecap="square"/><line x1="460" y1="235" x2="555" y2="325" stroke="#000" stroke-width="14" stroke-linecap="square"/><line x1="555" y1="325" x2="460" y2="415" stroke="#000" stroke-width="14" stroke-linecap="square"/><line x1="460" y1="415" x2="460" y2="368" stroke="#fff" stroke-width="10" stroke-linecap="square"/><line x1="460" y1="368" x2="205" y2="368" stroke="#000" stroke-width="14" stroke-linecap="square"/><line x1="205" y1="368" x2="205" y2="415" stroke="#000" stroke-width="14" stroke-linecap="square"/><line x1="205" y1="415" x2="115" y2="325" stroke="#000" stroke-width="14" stroke-linecap="square"/></svg>
<svg class="a" style="left:290px;top:546px" width="60" height="60" viewBox="0 0 627 627"><polygon points="315,105 405,200 352,200 352,450 405,450 315,540 225,450 268,450 268,200 225,200" fill="#d6d6d6"/><line x1="315" y1="105" x2="405" y2="200" stroke="#000" stroke-width="14" stroke-linecap="square"/><line x1="405" y1="200" x2="352" y2="200" stroke="#000" stroke-width="14" stroke-linecap="square"/><line x1="352" y1="200" x2="352" y2="450" stroke="#000" stroke-width="14" stroke-linecap="square"/><line x1="352" y1="450" x2="405" y2="450" stroke="#fff" stroke-width="10" stroke-linecap="square"/><line x1="405" y1="450" x2="315" y2="540" stroke="#000" stroke-width="14" stroke-linecap="square"/><line x1="315" y1="540" x2="225" y2="450" stroke="#000" stroke-width="14" stroke-linecap="square"/><line x1="225" y1="450" x2="268" y2="450" stroke="#fff" stroke-width="10" stroke-linecap="square"/><line x1="268" y1="450" x2="268" y2="200" stroke="#fff" stroke-width="10" stroke-linecap="square"/><line x1="268" y1="200" x2="225" y2="200" stroke="#000" stroke-width="14" stroke-linecap="square"/><line x1="225" y1="200" x2="315" y2="105" stroke="#fff" stroke-width="10" stroke-linecap="square"/></svg>
<svg class="a" style="left:362px;top:546px" width="60" height="60" viewBox="0 0 627 627"><polygon points="335,105 405,180 362,180 410,385 490,385 335,540 180,385 258,385 298,180 265,180" fill="#d6d6d6"/><line x1="335" y1="105" x2="405" y2="180" stroke="#000" stroke-width="14" stroke-linecap="square"/><line x1="405" y1="180" x2="362" y2="180" stroke="#000" stroke-width="14" stroke-linecap="square"/><line x1="362" y1="180" x2="410" y2="385" stroke="#000" stroke-width="14" stroke-linecap="square"/><line x1="410" y1="385" x2="490" y2="385" stroke="#fff" stroke-width="10" stroke-linecap="square"/><line x1="490" y1="385" x2="335" y2="540" stroke="#000" stroke-width="14" stroke-linecap="square"/><line x1="335" y1="540" x2="180" y2="385" stroke="#000" stroke-width="14" stroke-linecap="square"/><line x1="180" y1="385" x2="258" y2="385" stroke="#fff" stroke-width="10" stroke-linecap="square"/><line x1="258" y1="385" x2="298" y2="180" stroke="#fff" stroke-width="10" stroke-linecap="square"/><line x1="298" y1="180" x2="265" y2="180" stroke="#000" stroke-width="14" stroke-linecap="square"/><line x1="265" y1="180" x2="335" y2="105" stroke="#fff" stroke-width="10" stroke-linecap="square"/></svg>
<svg class="a" style="left:488px;top:91px" width="114" height="114" viewBox="0 0 627 627">
<defs>
<filter id="tf" x="18" y="18" width="587" height="582" filterUnits="userSpaceOnUse" color-interpolation-filters="sRGB">
<feTurbulence type="turbulence" baseFrequency="0.02 0.035" numOctaves="2" seed="3"/>
<feColorMatrix type="matrix" values="1 0 0 0 0  1 0 0 0 0  1 0 0 0 0  0 0 0 0 1"/>
<feComponentTransfer>
<feFuncR type="table" tableValues="0.40 0.76 0.68 0.56 0.46 0.36"/>
<feFuncG type="table" tableValues="0.02 0.06 0.05 0.04 0.03 0.02"/>
<feFuncB type="table" tableValues="0.03 0.06 0.05 0.04 0.03 0.02"/>
</feComponentTransfer>
</filter>
<filter id="tb"><feGaussianBlur stdDeviation="8"/></filter>
<clipPath id="tc"><rect x="18" y="18" width="587" height="582"/></clipPath>
</defs>
<rect x="18" y="18" width="587" height="582" fill="#fff" filter="url(#tf)"/>
<g clip-path="url(#tc)">
<path d="M18 30 L605 30 M81 30 L81 63 M161 30 L166 63 M232 30 L227 63 M301 30 L299 63 M376 30 L371 63 M436 30 L432 63 M502 30 L504 63 M564 30 L565 63 M18 63 L605 60 M46 63 L44 96 M101 63 L99 96 M169 63 L168 96 M229 63 L230 96 M289 63 L285 96 M348 63 L352 96 M422 63 L424 96 M481 63 L478 96 M536 63 L531 96 M597 63 L595 96 M18 96 L605 94 M67 96 L67 129 M128 96 L131 129 M204 96 L209 129 M265 96 L262 129 M342 96 L340 129 M409 96 L408 129 M464 96 L464 129 M532 96 L529 129 M591 96 L590 129 M18 129 L605 130 M37 129 L41 162 M110 129 L105 162 M184 129 L189 162 M261 129 L261 162 M318 129 L317 162 M384 129 L383 162 M454 129 L454 162 M514 129 L516 162 M584 129 L581 162 M18 162 L605 162 M88 162 L83 195 M166 162 L166 195 M233 162 L228 195 M305 162 L306 195 M371 162 L372 195 M444 162 L439 195 M513 162 L508 195 M590 162 L587 195 M18 195 L605 194 M31 195 L29 228 M100 195 L100 228 M171 195 L171 228 M242 195 L241 228 M321 195 L323 228 M379 195 L383 228 M457 195 L457 228 M521 195 L516 228 M589 195 L585 228 M18 228 L605 229 M74 228 L78 261 M140 228 L137 261 M205 228 L204 261 M282 228 L285 261 M339 228 L338 261 M415 228 L415 261 M479 228 L476 261 M559 228 L555 261 M18 261 L605 259 M51 261 L50 294 M121 261 L118 294 M199 261 L194 294 M256 261 L260 294 M328 261 L329 294 M384 261 L382 294 M462 261 L466 294 M528 261 L527 294 M597 261 L602 294 M18 294 L605 292 M59 294 L64 327 M115 294 L117 327 M180 294 L178 327 M239 294 L243 327 M298 294 L303 327 M378 294 L379 327 M436 294 L433 327 M504 294 L504 327 M563 294 L558 327 M18 327 L605 327 M32 327 L34 360 M106 327 L103 360 M177 327 L179 360 M247 327 L247 360 M317 327 L316 360 M381 327 L383 360 M448 327 L445 360 M506 327 L507 360 M578 327 L575 360 M18 360 L605 363 M85 360 L85 393 M145 360 L141 393 M215 360 L214 393 M286 360 L289 393 M357 360 L357 393 M414 360 L414 393 M491 360 L495 393 M567 360 L562 393 M18 393 L605 393 M39 393 L42 426 M116 393 L121 426 M179 393 L181 426 M242 393 L241 426 M307 393 L312 426 M367 393 L371 426 M422 393 L424 426 M494 393 L493 426 M559 393 L564 426 M18 426 L605 429 M67 426 L70 459 M142 426 L147 459 M222 426 L222 459 M288 426 L287 459 M363 426 L363 459 M441 426 L442 459 M507 426 L504 459 M584 426 L586 459 M18 459 L605 460 M44 459 L41 492 M115 459 L112 492 M176 459 L176 492 M246 459 L245 492 M323 459 L319 492 M401 459 L406 492 M479 459 L480 492 M539 459 L543 492 M18 492 L605 496 M79 492 L80 525 M143 492 L147 525 M215 492 L220 525 M278 492 L273 525 M339 492 L336 525 M412 492 L414 525 M486 492 L491 525 M546 492 L544 525 M18 525 L605 523 M48 525 L43 558 M118 525 L116 558 M178 525 L173 558 M237 525 L233 558 M302 525 L299 558 M372 525 L370 558 M444 525 L439 558 M512 525 L514 558 M578 525 L579 558 M18 558 L605 555 M76 558 L74 591 M138 558 L138 591 M193 558 L193 591 M260 558 L259 591 M328 558 L324 591 M405 558 L408 591 M471 558 L466 591 M543 558 L547 591 M18 591 L605 588 M37 591 L40 624 M108 591 L108 624 M181 591 L180 624 M247 591 L244 624 M315 591 L316 624 M388 591 L393 624 M460 591 L460 624 M529 591 L526 624 M589 591 L593 624" stroke="#5a0606" stroke-width="6" fill="none" opacity="0.55"/>
<g fill="none" stroke="#e0a0a0" stroke-opacity="0.32" filter="url(#tb)">
<ellipse cx="310" cy="300" rx="250" ry="240" stroke-width="22"/>
<ellipse cx="300" cy="310" rx="180" ry="170" stroke-width="18"/>
<ellipse cx="305" cy="300" rx="110" ry="110" stroke-width="16"/>
<path d="M120 120 Q300 40 470 130" stroke-width="26"/>
<path d="M90 480 Q300 600 520 470" stroke-width="24"/>
</g>
<g filter="url(#tb)">
<ellipse cx="175" cy="275" rx="40" ry="30" fill="#2a1818" opacity="0.8"/>
<ellipse cx="445" cy="270" rx="40" ry="32" fill="#2a1818" opacity="0.8"/>
<path d="M165 365 Q200 420 280 425 Q360 425 440 370" fill="none" stroke="#1c1c28" stroke-width="34" opacity="0.85"/>
</g>
</g>
<text x="302" y="247" text-anchor="middle" fill="#fff" font-family="Liberation Sans" font-weight="bold" font-size="76" stroke="#fff" stroke-width="3" transform="translate(302 0) scale(0.82 1) translate(-302 0)">This Side Up</text>
</svg>

</body></html>
